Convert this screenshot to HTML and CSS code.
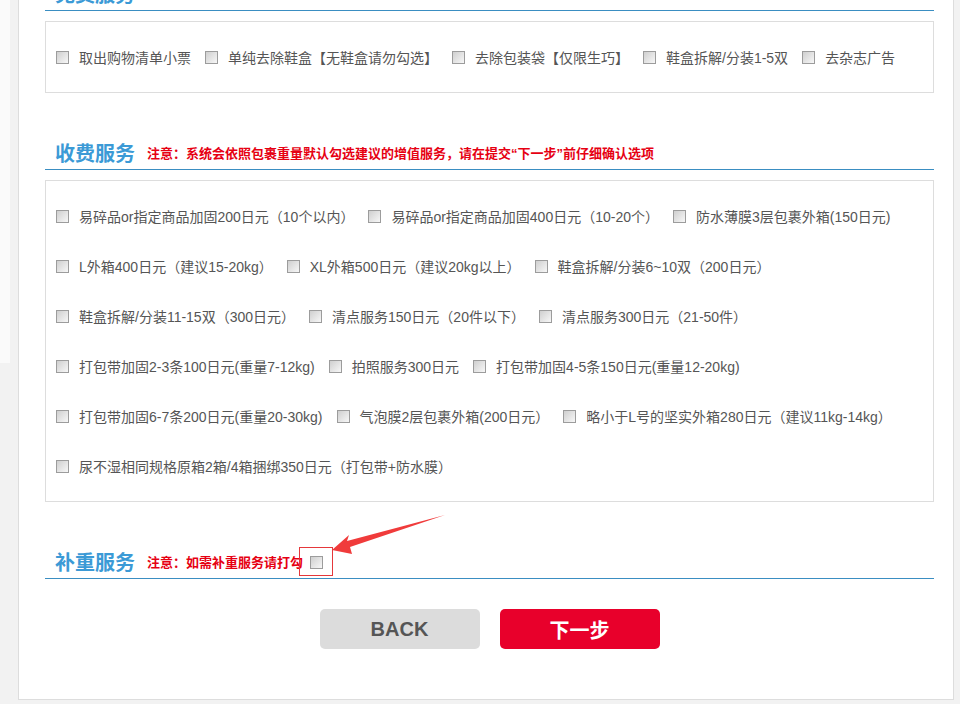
FILE: index.html
```html
<!DOCTYPE html>
<html lang="zh-CN">
<head>
  <meta charset="UTF-8">
  <title>增值服务</title>
  <link rel="stylesheet" href="styles.css">
</head>
<body>
  <div class="layout">
    <div class="side"></div>
    <div class="panel">
      <div class="section">
        <h3 class="sec-title"><span class="title">免费服务</span></h3>
        <div class="opts">
          <div class="row">
            <label class="opt"><input type="checkbox"><span>取出购物清单小票</span></label>
            <label class="opt"><input type="checkbox"><span>单纯去除鞋盒【无鞋盒请勿勾选】</span></label>
            <label class="opt"><input type="checkbox"><span>去除包装袋【仅限生巧】</span></label>
            <label class="opt"><input type="checkbox"><span>鞋盒拆解/分装1-5双</span></label>
            <label class="opt"><input type="checkbox"><span>去杂志广告</span></label>
          </div>
        </div>
      </div>

      <div class="section">
        <h3 class="sec-title">
          <span class="title">收费服务</span>
          <span class="note">注意：系统会依照包裹重量默认勾选建议的增值服务，请在提交“下一步”前仔细确认选项</span>
        </h3>
        <div class="opts">
          <div class="row">
            <label class="opt"><input type="checkbox"><span>易碎品or指定商品加固200日元（10个以内）</span></label>
            <label class="opt"><input type="checkbox"><span>易碎品or指定商品加固400日元（10-20个）</span></label>
            <label class="opt"><input type="checkbox"><span>防水薄膜3层包裹外箱(150日元)</span></label>
          </div>
          <div class="row">
            <label class="opt"><input type="checkbox"><span>L外箱400日元（建议15-20kg）</span></label>
            <label class="opt"><input type="checkbox"><span>XL外箱500日元（建议20kg以上）</span></label>
            <label class="opt"><input type="checkbox"><span>鞋盒拆解/分装6~10双（200日元）</span></label>
          </div>
          <div class="row">
            <label class="opt"><input type="checkbox"><span>鞋盒拆解/分装11-15双（300日元）</span></label>
            <label class="opt"><input type="checkbox"><span>清点服务150日元（20件以下）</span></label>
            <label class="opt"><input type="checkbox"><span>清点服务300日元（21-50件）</span></label>
          </div>
          <div class="row">
            <label class="opt"><input type="checkbox"><span>打包带加固2-3条100日元(重量7-12kg)</span></label>
            <label class="opt"><input type="checkbox"><span>拍照服务300日元</span></label>
            <label class="opt"><input type="checkbox"><span>打包带加固4-5条150日元(重量12-20kg)</span></label>
          </div>
          <div class="row">
            <label class="opt"><input type="checkbox"><span>打包带加固6-7条200日元(重量20-30kg)</span></label>
            <label class="opt"><input type="checkbox"><span>气泡膜2层包裹外箱(200日元）</span></label>
            <label class="opt"><input type="checkbox"><span>略小于L号的坚实外箱280日元（建议11kg-14kg）</span></label>
          </div>
          <div class="row">
            <label class="opt"><input type="checkbox"><span>尿不湿相同规格原箱2箱/4箱捆绑350日元（打包带+防水膜）</span></label>
          </div>
        </div>
      </div>

      <div class="section">
        <h3 class="sec-title">
          <span class="title">补重服务</span>
          <span class="note">注意：如需补重服务请打勾</span>
          <label class="mark"><input type="checkbox"></label>
          <!-- annotation arrow pointing at the checkbox -->
          <svg class="arrow" width="120" height="45" viewBox="0 0 120 45">
            <polygon points="2,37 19,22 17,28 115,2 20,34 22,41" fill="#f03b3b"/>
          </svg>
        </h3>
      </div>

      <div class="actions">
        <button class="btn btn-back">BACK</button>
        <button class="btn btn-next">下一步</button>
      </div>
    </div>
  </div>
</body>
</html>
```

FILE: styles.css
```css
body {
  margin: 0;
  background: #f2f2f2;
  font-family: "Liberation Sans", "Noto Sans CJK SC", sans-serif;
  font-size: 14px;
  color: #555;
}
.layout {
  display: flex;
  align-items: flex-start;
  gap: 8px;
}
.side {
  width: 10px;
  height: 363px;
  background: #fafafa;
}
.panel {
  width: 889px;
  margin-top: -45px;
  padding: 20px 19px 50px 26px;
  background: #fff;
  border: 1px solid #ddd;
}
.section + .section {
  margin-top: 42px;
}
.sec-title {
  position: relative;
  display: flex;
  align-items: center;
  height: 34px;
  margin: 0;
  padding-left: 10px;
  border-bottom: 1px solid #3a8ec2;
  font-weight: normal;
}
.title {
  font-size: 20px;
  font-weight: bold;
  color: #3b9ad6;
}
.note {
  margin-left: 12px;
  font-size: 13px;
  font-weight: bold;
  color: #e60012;
}
.opts {
  margin-top: 10px;
  padding: 10px;
  border: 1px solid #ddd;
}
.row {
  display: flex;
  align-items: center;
  height: 50px;
  white-space: nowrap;
}
.opt {
  display: flex;
  align-items: center;
  margin-right: 14px;
}
input[type="checkbox"] {
  -webkit-appearance: none;
  appearance: none;
  width: 13px;
  height: 13px;
  margin: 0 10px 0 0;
  border: 1px solid #9c9c9c;
  background: linear-gradient(135deg, #cfcfcf, #f7f7f7);
  box-sizing: border-box;
}
.mark {
  display: inline-flex;
  margin-left: -4px;
  padding: 8px 9px 6px 10px;
  border: 1px solid #e5383b;
}
.mark input[type="checkbox"] {
  margin: 0;
}
.arrow {
  position: absolute;
  left: 285px;
  top: -31px;
}
.actions {
  display: flex;
  justify-content: center;
  gap: 20px;
  margin-top: 30px;
}
.btn {
  width: 160px;
  height: 40px;
  border: 0;
  border-radius: 5px;
  font-family: inherit;
  font-size: 20px;
  font-weight: bold;
  cursor: pointer;
}
.btn-back {
  background: #dcdcdc;
  color: #555;
}
.btn-next {
  background: #e8002b;
  color: #fff;
}
```
